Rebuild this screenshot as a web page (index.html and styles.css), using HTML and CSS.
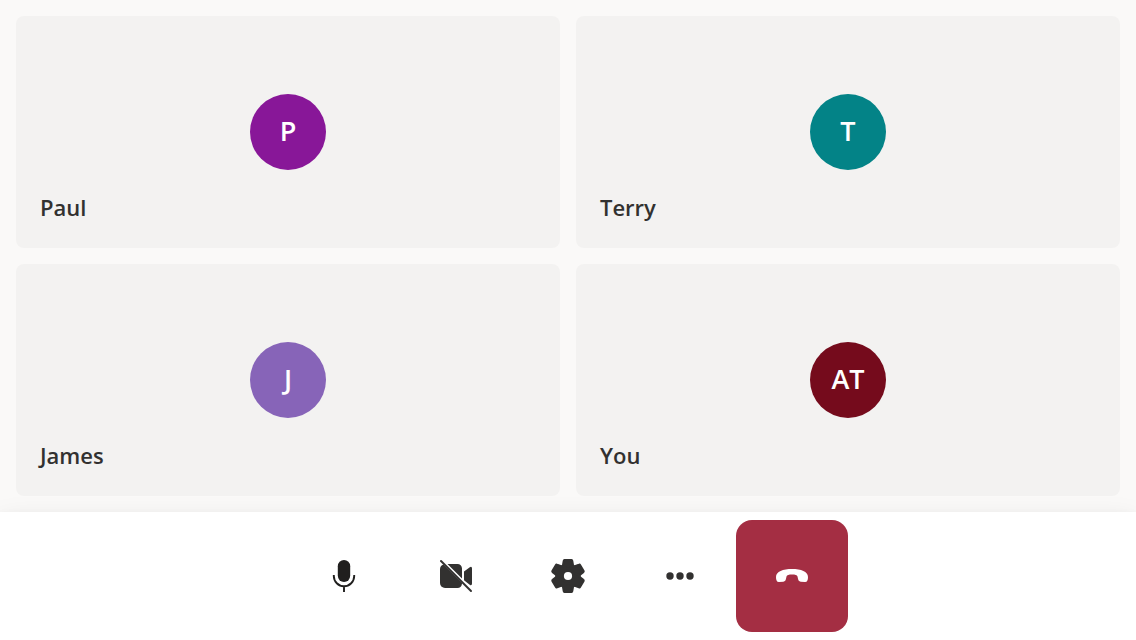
FILE: index.html
```html
<!DOCTYPE html>
<html lang="en">
<head>
<meta charset="utf-8">
<meta name="viewport" content="width=device-width, initial-scale=1">
<title>Group call</title>
<link rel="stylesheet" href="styles.css">
</head>
<body>
<main class="gallery">
  <section class="tile">
    <div class="avatar avatar-purple">P</div>
    <h2 class="name">Paul</h2>
  </section>
  <section class="tile">
    <div class="avatar avatar-teal">T</div>
    <h2 class="name">Terry</h2>
  </section>
  <section class="tile">
    <div class="avatar avatar-violet">J</div>
    <h2 class="name">James</h2>
  </section>
  <section class="tile">
    <div class="avatar avatar-maroon">AT</div>
    <h2 class="name">You</h2>
  </section>
</main>
<footer class="controls">
  <button class="control control-mic" type="button" aria-label="Mute">
    <svg class="icon" viewBox="-20 -20 40 40" aria-hidden="true">
      <rect x="-6.200" y="-16" width="12.400" height="22" rx="6.200" fill="currentColor"/>
      <path d="M-10.200-.9V0a10.200 10.200 0 0 0 20.400 0V-.9M0 10.500V16" fill="none" stroke="currentColor" stroke-width="1.900"/>
    </svg>
  </button>
  <button class="control" type="button" aria-label="Turn camera on">
    <svg class="icon" viewBox="-20 -20 40 40" aria-hidden="true">
      <path d="M-15-15 15 15" stroke="currentColor" stroke-width="2" stroke-linecap="round"/>
      <path d="M-12.600-11.600 6 7V7.500A4.500 4.500 0 0 1 1.500 12H-11A5 5 0 0 1-16 7V-7A5 5 0 0 1-12.600-11.600Z" fill="currentColor"/>
      <path d="M-8.500-12H1.500A4.500 4.500 0 0 1 6-7.500V2.500ZM8-4.500 13.800-8.800Q16-10 16-7.500V7.500Q16 9.800 14 8.900L8 4.200Z" fill="currentColor"/>
    </svg>
  </button>
  <button class="control" type="button" aria-label="Devices">
    <svg class="icon" viewBox="-20 -20 40 40" aria-hidden="true">
      <mask id="gear-hole"><path d="M-20-20H20V20H-20Z" fill="#fff"/><circle r="4.100" fill="#000"/></mask>
      <g mask="url(#gear-hole)" fill="currentColor" stroke="currentColor" stroke-width="2" stroke-linejoin="round">
        <circle r="10.800"/>
        <path id="gear-teeth" d="M-3.600-16H3.600Q4.200-16 4.300-15.200L4.900-11.500Q5-10.500 6-9.800V9.800Q5 10.500 4.900 11.500L4.300 15.200Q4.200 16 3.600 16H-3.600Q-4.200 16-4.300 15.200L-4.900 11.500Q-5 10.500-6 9.800V-9.800Q-5-10.500-4.900-11.500L-4.300-15.200Q-4.200-16-3.600-16Z"/>
        <use href="#gear-teeth" transform="rotate(60)"/>
        <use href="#gear-teeth" transform="rotate(120)"/>
      </g>
    </svg>
  </button>
  <button class="control" type="button" aria-label="More options">
    <svg class="icon" viewBox="-20 -20 40 40" fill="currentColor" aria-hidden="true">
      <circle cx="-10" r="3.700"/><circle r="3.700"/><circle cx="10" r="3.700"/>
    </svg>
  </button>
  <button class="control control-leave" type="button" aria-label="Leave">
    <svg class="icon" viewBox="-20 -20 40 40" aria-hidden="true">
      <path d="M0-7C9-7 16-4.500 16 1C16 4 15.300 6.200 12.800 6L8.700 5.700C6.900 5.500 6.300 4.300 6 2.800L5.500 .5C5.200-1.100 3-1.500 0-1.500S-5.200-1.100-5.500 .5L-6 2.800C-6.300 4.300-6.900 5.500-8.700 5.700L-12.800 6C-15.300 6.200-16 4-16 1C-16-4.500-9-7 0-7Z" fill="currentColor"/>
    </svg>
  </button>
</footer>
</body>
</html>
```
FILE: styles.css
```css
*, *::before, *::after {
  box-sizing: border-box;
}

body {
  display: flex;
  flex-direction: column;
  min-height: 100vh;
  margin: 0;
  background: #faf9f8;
  color: #323130;
  font-family: "Open Sans", "Noto Sans", sans-serif;
}

.gallery {
  display: grid;
  flex: 1;
  grid-template-columns: repeat(2, 1fr);
  grid-auto-rows: 1fr;
  gap: 16px;
  padding: 16px;
}

.tile {
  display: grid;
  min-height: 160px;
  padding: 24px;
  border-radius: 8px;
  background: #f3f2f1;
}

.avatar,
.name {
  grid-area: 1 / 1;
}

.avatar {
  place-self: center;
  width: 76px;
  height: 76px;
  border-radius: 50%;
  color: #fff;
  font-size: 27px;
  font-weight: 600;
  line-height: 74px;
  text-align: center;
}

.avatar-purple { background: #881798; }
.avatar-teal { background: #038387; }
.avatar-violet { background: #8764b8; }
.avatar-maroon { background: #750b1c; }

.name {
  align-self: end;
  margin: 0;
  font-size: 22px;
  font-weight: 600;
  line-height: 34px;
}

.controls {
  display: flex;
  justify-content: center;
  padding: 8px;
  background: #fff;
  box-shadow: 0 12px 28px rgba(0, 0, 0, 0.13), 0 2px 8px rgba(0, 0, 0, 0.04);
}

.control {
  display: grid;
  place-items: center;
  width: 112px;
  height: 112px;
  padding: 0;
  border: 0;
  border-radius: 16px;
  background: transparent;
  color: #323130;
  cursor: pointer;
}

.control-mic {
  color: #201f1e;
}

.control-leave {
  background: #a42e43;
  color: #fff;
}

.icon {
  width: 40px;
  height: 40px;
}
```
